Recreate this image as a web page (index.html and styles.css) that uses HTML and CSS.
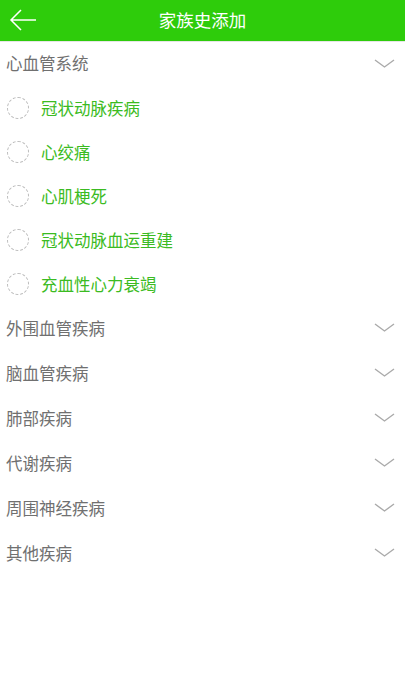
FILE: index.html
```html
<!DOCTYPE html>
<html lang="zh">
<head>
<meta charset="utf-8">
<link rel="stylesheet" href="styles.css">
</head>
<body>
<header class="bar">
  <svg class="back" width="28" height="22" viewBox="0 0 28 22"><path d="M27 11H2M12 1L2 11l10 10" fill="none" stroke="#fff" stroke-width="1.5"/></svg>
  <h1 class="title">家族史添加</h1>
</header>
<main class="list">
  <div class="group first">
    <span>心血管系统</span>
    <svg class="chev" width="21" height="9" viewBox="0 0 21 9"><path d="M1 1l9.5 7L20 1" fill="none" stroke="#aaa" stroke-width="1.4"/></svg>
  </div>
  <div class="item"><span class="radio"></span><span>冠状动脉疾病</span></div>
  <div class="item"><span class="radio"></span><span>心绞痛</span></div>
  <div class="item"><span class="radio"></span><span>心肌梗死</span></div>
  <div class="item"><span class="radio"></span><span>冠状动脉血运重建</span></div>
  <div class="item"><span class="radio"></span><span>充血性心力衰竭</span></div>
  <div class="group"><span>外围血管疾病</span><svg class="chev" width="21" height="9" viewBox="0 0 21 9"><path d="M1 1l9.5 7L20 1" fill="none" stroke="#aaa" stroke-width="1.4"/></svg></div>
  <div class="group"><span>脑血管疾病</span><svg class="chev" width="21" height="9" viewBox="0 0 21 9"><path d="M1 1l9.5 7L20 1" fill="none" stroke="#aaa" stroke-width="1.4"/></svg></div>
  <div class="group"><span>肺部疾病</span><svg class="chev" width="21" height="9" viewBox="0 0 21 9"><path d="M1 1l9.5 7L20 1" fill="none" stroke="#aaa" stroke-width="1.4"/></svg></div>
  <div class="group"><span>代谢疾病</span><svg class="chev" width="21" height="9" viewBox="0 0 21 9"><path d="M1 1l9.5 7L20 1" fill="none" stroke="#aaa" stroke-width="1.4"/></svg></div>
  <div class="group"><span>周围神经疾病</span><svg class="chev" width="21" height="9" viewBox="0 0 21 9"><path d="M1 1l9.5 7L20 1" fill="none" stroke="#aaa" stroke-width="1.4"/></svg></div>
  <div class="group"><span>其他疾病</span><svg class="chev" width="21" height="9" viewBox="0 0 21 9"><path d="M1 1l9.5 7L20 1" fill="none" stroke="#aaa" stroke-width="1.4"/></svg></div>
</main>
</body>
</html>
```
FILE: styles.css
```css
* { box-sizing: border-box; }
body {
  margin: 0;
  background: #fff;
  font-family: "Noto Sans CJK SC", "Noto Sans", sans-serif;
}
.bar {
  position: relative;
  height: 42px;
  background: #2ecc0b;
  border-bottom: 1px solid #e6e6e6;
  display: flex;
  align-items: center;
  justify-content: center;
}
.back {
  position: absolute;
  left: 9px;
  top: 9px;
}
.title {
  margin: 0 0 2px;
  color: #fff;
  font-size: 17.5px;
  font-weight: normal;
  line-height: 1;
}
.list {
  display: flex;
  flex-direction: column;
}
.group {
  height: 45px;
  display: flex;
  align-items: center;
  justify-content: space-between;
  padding: 0 10px 2px 6px;
  color: #707070;
  font-size: 16.5px;
}
.group.first { height: 44px; }
.item {
  height: 44px;
  display: flex;
  align-items: center;
  gap: 12px;
  padding-left: 7px;
  color: #3bbb22;
  font-size: 16.5px;
}
.radio {
  width: 22px;
  height: 22px;
  border: 1px dashed #bdbdbd;
  border-radius: 50%;
  flex: none;
}
.chev { display: block; }
```
